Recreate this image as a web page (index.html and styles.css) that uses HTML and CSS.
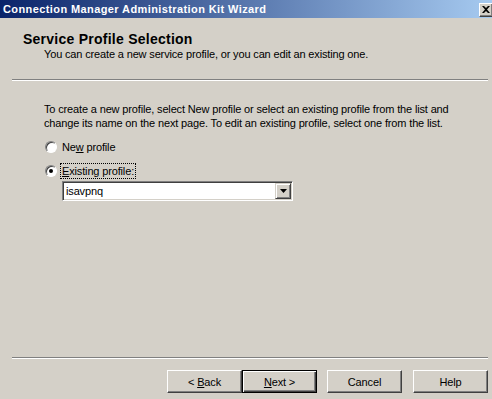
FILE: index.html
```html
<!DOCTYPE html>
<html lang="en">
<head>
    <meta charset="UTF-8">
    <title>Connection Manager Administration Kit Wizard</title>
    <link rel="stylesheet" href="styles.css">
</head>
<body>

<div class="window">
    <!-- Title Bar -->
    <div class="titlebar">
        <span class="title">Connection Manager Administration Kit Wizard</span>
        <span class="close-btn">
            <svg width="8" height="7" viewBox="0 0 8 7"><path d="M0 0h2l2 2 2-2h2L5 3.5 8 7H6L4 5 2 7H0l3-3.5z" fill="#000"/></svg>
        </span>
    </div>

    <!-- Header -->
    <div class="header">
        <h1 class="header-title">Service Profile Selection</h1>
        <p class="header-sub">You can create a new service profile, or you can edit an existing one.</p>
    </div>
    <div class="etched"></div>

    <!-- Page Content -->
    <div class="content">
        <p class="intro">To create a new profile, select New profile or select an existing profile from the list and change its name on the next page. To edit an existing profile, select one from the list.</p>

        <div class="option">
            <span class="radio"></span>
            <span class="label">Ne<u>w</u> profile</span>
        </div>
        <div class="option">
            <span class="radio checked"></span>
            <span class="label focused"><u>E</u>xisting profile:</span>
        </div>

        <div class="combo">
            <span class="combo-text">isavpnq</span>
            <span class="combo-btn">
                <svg width="7" height="4" viewBox="0 0 7 4"><path d="M0 0h7L3.5 4z" fill="#000"/></svg>
            </span>
        </div>
    </div>

    <!-- Footer -->
    <div class="etched bottom"></div>
    <div class="buttons">
        <div class="pair">
            <button class="btn">&lt; <u>B</u>ack</button>
            <button class="btn default"><u>N</u>ext &gt;</button>
        </div>
        <button class="btn">Cancel</button>
        <button class="btn">Help</button>
    </div>
</div>

</body>
</html>
```

FILE: styles.css
```css
/* General Styling */
body {
    margin: 0;
    font-family: 'Liberation Sans', Arial, sans-serif;
    font-size: 11px;
    letter-spacing: -0.15px;
    color: #000;
    background: #d4d0c8;
}

.window {
    width: 492px;
    height: 399px;
    display: flex;
    flex-direction: column;
    background: #d4d0c8;
}

/* Title Bar */
.titlebar {
    height: 18px;
    display: flex;
    align-items: center;
    justify-content: space-between;
    background: linear-gradient(to right, #0a246a, #a6caf0);
    padding: 0 0 0 3px;
}
.title {
    color: #fff;
    font-weight: bold;
    font-size: 11px;
    letter-spacing: 0.4px;
}
.close-btn {
    width: 12px;
    height: 12px;
    margin-top: 1px;
    display: flex;
    align-items: center;
    justify-content: center;
    background: #d4d0c8;
    border-top: 1px solid #fff;
    border-left: 1px solid #fff;
    border-bottom: 1px solid #404040;
    box-shadow: inset -1px -1px #808080;
}

/* Header */
.header {
    height: 61px;
    padding-left: 23px;
}
.header-title {
    margin: 13px 0 0;
    font-size: 14px;
    font-weight: bold;
    letter-spacing: 0.25px;
}
.header-sub {
    margin: 1px 0 0 21px;
}

.etched {
    margin: 0 4px 0 12px;
    border-top: 1px solid #808080;
    border-bottom: 1px solid #fff;
    height: 0;
}

/* Content */
.content {
    flex: 1;
    padding: 21px 30px 0 44px;
}
.intro {
    margin: 0 0 10px;
    line-height: 14px;
}
.option {
    display: flex;
    align-items: center;
    height: 13px;
    margin-bottom: 11px;
    padding-left: 1px;
}
.radio {
    position: relative;
    width: 10px;
    height: 10px;
    border-radius: 50%;
    background: #fff;
    border: 1px solid;
    border-color: #808080 #fff #fff #808080;
    box-shadow: inset 1px 1px #404040;
    margin-right: 5px;
}
.checked::after {
    content: "";
    position: absolute;
    left: 3px;
    top: 3px;
    width: 4px;
    height: 4px;
    border-radius: 50%;
    background: #000;
}
.label.focused {
    outline: 1px dotted #000;
    outline-offset: 1px;
}

/* Combo Box */
.combo {
    width: 227px;
    height: 16px;
    margin: -7px 0 0 18px;
    display: flex;
    justify-content: space-between;
    align-items: center;
    background: #fff;
    border: 1px solid;
    border-color: #808080 #fff #fff #808080;
    box-shadow: inset 1px 1px #404040, inset -1px -1px #d4d0c8;
    padding: 1px;
}
.combo-text {
    padding-left: 2px;
}
.combo-btn {
    width: 14px;
    height: 14px;
    display: flex;
    align-items: center;
    justify-content: center;
    background: #d4d0c8;
    border: 1px solid;
    border-color: #d4d0c8 #404040 #404040 #d4d0c8;
    box-shadow: inset 1px 1px #fff, inset -1px -1px #808080;
}

/* Footer Buttons */
.bottom {
    margin-bottom: 11px;
}
.buttons {
    display: flex;
    gap: 11px;
    padding-left: 167px;
    height: 29px;
}
.pair {
    display: flex;
    margin-right: -1px;
}
.btn {
    width: 75px;
    height: 23px;
    padding: 0;
    font-family: inherit;
    font-size: 11px;
    letter-spacing: -0.15px;
    color: #000;
    background: #d4d0c8;
    border: 1px solid;
    border-color: #fff #404040 #404040 #fff;
    box-shadow: inset -1px -1px #808080;
}
.btn.default {
    border: 1px solid #000;
    box-shadow: inset 1px 1px #fff, inset -1px -1px #404040, inset -2px -2px #808080;
}
```
